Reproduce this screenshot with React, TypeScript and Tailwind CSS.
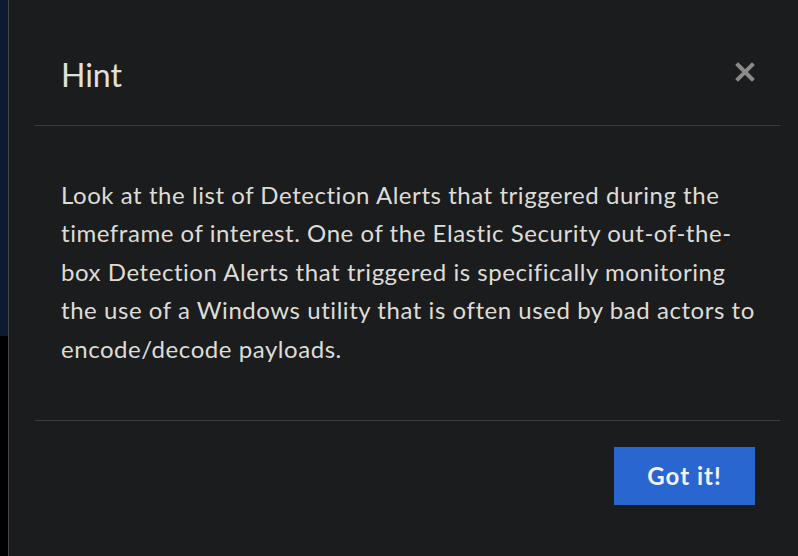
export default function App() {
  return (
    <div
      className="flex h-[556px] w-[798px] overflow-hidden bg-black"
      style={{ fontFamily: "Lato, 'Noto Sans', sans-serif" }}
    >
      {/* page behind the modal */}
      <div className="flex w-[8px] shrink-0 flex-col">
        <div className="h-[336px] bg-[#0d1a31]" />
        <div className="flex-1 bg-black" />
      </div>

      {/* Modal */}
      <div className="flex w-[798px] shrink-0 flex-col border-l border-[#45474b] bg-[#1b1c1e]">
        <header className="flex items-start justify-between pb-[30px] pl-[52px] pr-[50px] pt-[55px]">
          <h1 className="text-[32px] leading-[40px] text-[#e2e0db]">Hint</h1>
          <button className="mt-[6px] text-[#8a8a8a]">
            <svg width="22" height="22" viewBox="0 0 22 22">
              <path d="M4 4 L18 18 M18 4 L4 18" stroke="currentColor" strokeWidth="4" strokeLinecap="square" />
            </svg>
          </button>
        </header>
        <div className="mx-[26px] h-px bg-[#3b3c3f]" />

        <div className="pb-[52px] pl-[52px] pr-[51px] pt-[50px]">
          <p className="text-[24px] leading-[38.4px] tracking-[0.55px] text-[#dedcd7]">
            Look at the list of Detection Alerts that triggered during the timeframe of interest. One of
            the Elastic Security out-of-the-box Detection Alerts that triggered is specifically monitoring
            the use of a Windows utility that is often used by bad actors to encode/decode payloads.
          </p>
        </div>
        <div className="mx-[26px] h-px bg-[#3b3c3f]" />

        <footer className="flex justify-end pl-[52px] pr-[51px] pt-[26px]">
          <button className="h-[58px] w-[141px] bg-[#2a66d0] text-[24px] font-bold tracking-[1px] text-[#f2f2f2]">
            Got it!
          </button>
        </footer>
      </div>
    </div>
  );
}
